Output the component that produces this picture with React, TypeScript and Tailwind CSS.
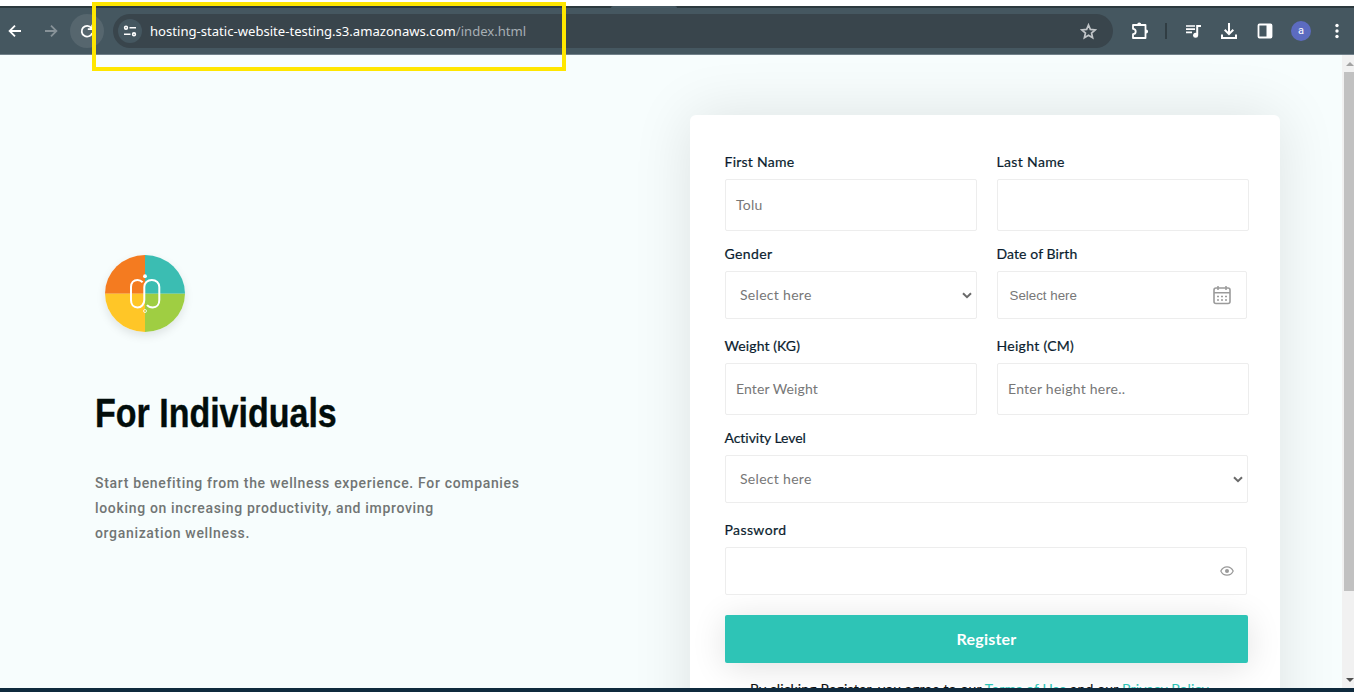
import React from "react";

const sofia = "font-['Lato','Open_Sans',sans-serif]";
const box = "flex items-center rounded-[2px] border border-[#ededed] bg-white";

function Label({ children, className }: { children: React.ReactNode; className: string }) {
  return (
    <label className={`-ml-[0.5px] mb-2 block h-[18px] whitespace-nowrap text-[14px] font-normal leading-[18px] text-[#0a1d2e] [-webkit-text-stroke:0.2px_#0a1d2e] ${className}`}>
      {children}
    </label>
  );
}

function Chevron() {
  return (
    <svg width="10" height="7" viewBox="0 0 10 7" className="shrink-0">
      <path d="M1 1.2 5 5.2 9 1.2" fill="none" stroke="#6a6a6a" strokeWidth="2" />
    </svg>
  );
}

function Toolbar() {
  return (
    <header className="shrink-0">
      <div className="h-1.5 bg-white" />
      <div className="flex h-0.5 bg-[#2c393e]">
        <div className="ml-[611px] h-0.5 w-[66px] rounded-t-sm bg-[#455760]" />
      </div>
      <div className="flex h-[47px] items-start border-b border-[#71818a] bg-[#455760] pt-1.5">
        <div className="flex h-[34px] w-[113px] shrink-0 items-center">
          <svg width="16" height="16" viewBox="0 0 16 16" className="ml-[7px]" fill="none" stroke="#fff" strokeWidth="1.8">
            <path d="M14 8H3M8 2.6 2.6 8 8 13.4" />
          </svg>
          <svg width="16" height="16" viewBox="0 0 16 16" className="ml-5" fill="none" stroke="#879298" strokeWidth="1.8">
            <path d="M2 8h11M8 2.6 13.4 8 8 13.4" />
          </svg>
          <div className="ml-[11px] flex size-[34px] items-center justify-center rounded-full bg-[#56666e]">
            <svg width="16" height="16" viewBox="0 0 16 16" fill="none" stroke="#fff" strokeWidth="1.8">
              <path d="M13.2 10A5.4 5.4 0 1 1 12.4 4.9M13.2 1.8v4.4H8.8" />
            </svg>
          </div>
        </div>
        <div className="flex h-[34px] w-[1000px] shrink-0 items-center rounded-full bg-[#39454c] pl-[5px] pr-4">
          <div className="flex size-6 items-center justify-center rounded-full bg-[#455760]">
            <svg width="14" height="12" viewBox="0 0 14 12" fill="none" stroke="#fff" strokeWidth="1.6">
              <circle cx="3" cy="2.7" r="1.4" />
              <path d="M6.500 2.7H13M1 9.3h6.500" />
              <circle cx="11" cy="9.3" r="1.4" />
            </svg>
          </div>
          <div className="ml-2 whitespace-nowrap font-['Noto_Sans','Open_Sans',sans-serif] text-[13.1px] leading-5 text-[#a7afb4]">
            <span className="text-white">hosting-static-website-testing.s3.amazonaws.com</span>/index.html
          </div>
          <svg width="17" height="17" viewBox="0 0 24 24" className="ml-auto" fill="none" stroke="#c1c5c8" strokeWidth="2.4">
            <path d="m12 2.8 2.6 6.3 6.8.6-5.1 4.5 1.5 6.7-5.8-3.5-5.8 3.5 1.5-6.7-5.1-4.5 6.8-.6z" />
          </svg>
        </div>
        <div className="flex h-[34px] flex-1 items-center">
          <svg width="18" height="18" viewBox="0 0 18 18" className="ml-[18px]">
            <path d="M2 3h12.500v13H2v-3.800a2.700 2.700 0 0 0 0-5.400z" fill="none" stroke="#fff" strokeWidth="1.8" strokeLinejoin="round" />
            <path d="M6.200 2.500a2 2 0 0 1 4 0zM15 7.400a2.100 2.100 0 0 1 0 4.2z" fill="#fff" />
          </svg>
          <div className="ml-4 h-4 w-0.5 bg-[#303d43]" />
          <svg width="17" height="15" viewBox="0 0 17 15" className="ml-[18px]">
            <path d="M1 2h9M1 5.2h9M1 8.4h6" stroke="#fff" strokeWidth="1.7" />
            <path d="M12.2 11V2H16" fill="none" stroke="#fff" strokeWidth="2" />
            <circle cx="10.6" cy="11.2" r="2.5" fill="#fff" />
          </svg>
          <svg width="18" height="17" viewBox="0 0 18 17" className="ml-[18px]" fill="none" stroke="#fff" strokeWidth="2">
            <path d="M9 0v11M4.7 6.8 9 11.1l4.3-4.3M2 11.5V15h14v-3.5" />
          </svg>
          <svg width="16" height="16" viewBox="0 0 16 16" className="ml-[19px]">
            <rect x="1.5" y="1.5" width="13" height="13" rx="1" fill="none" stroke="#fff" strokeWidth="1.8" />
            <path d="M9.5 1h5v14h-5z" fill="#fff" />
          </svg>
          <div className="ml-[18px] flex size-5 items-center justify-center rounded-full bg-[#5c6bc0] font-['Roboto',sans-serif] text-[11px] leading-5 text-white">a</div>
          <svg width="4" height="16" viewBox="0 0 4 16" className="ml-6" fill="#fff">
            <circle cx="2" cy="2.5" r="1.7" />
            <circle cx="2" cy="8" r="1.7" />
            <circle cx="2" cy="13.5" r="1.7" />
          </svg>
        </div>
      </div>
    </header>
  );
}

function Logo() {
  return (
    <svg width="80" height="77" viewBox="0 0 80 77" className="ml-[10px] rounded-[50%] shadow-[0_4px_10px_rgba(0,0,0,0.1)]">
      <path d="M0 0h40v38.700H0z" fill="#f47b20" />
      <path d="M40 0h40v38.700H40z" fill="#3bbdb2" />
      <path d="M0 38.700h40V77H0z" fill="#ffc627" />
      <path d="M40 38.700h40V77H40z" fill="#9fce42" />
      <g fill="none" stroke="#fff" strokeWidth="2">
        <path d="M37.6 27.2Q35.5 25 32.5 25C28.500 25 26 28 26 32v13c0 4.500 2.500 7.500 6.500 7.500S39.300 49 39.300 45V32c0-4 3-7 7.500-7s7.500 3 7.500 7v13c0 4.500-2.500 7.500-6.500 7.500q-3.800 0-5.800-2.500" />
        <circle cx="40" cy="56" r="1.500" strokeWidth=".8" />
      </g>
      <circle cx="40" cy="21.200" r="1.900" fill="#fff" />
    </svg>
  );
}

function Intro() {
  return (
    <section className="w-[690px] shrink-0 pl-[95px] pt-[200px]">
      <Logo />
      <h1 className="mt-[57px] w-max origin-left scale-x-[0.829] whitespace-nowrap font-['Liberation_Sans',Arial,sans-serif] text-[41px] font-bold leading-[48px] text-[#020d0b] [-webkit-text-stroke:0.4px_#020d0b]">
        For Individuals
      </h1>
      <p className="mt-[34px] w-[440px] whitespace-nowrap font-['Roboto',sans-serif] text-[14px] font-medium leading-[25px] tracking-[0.67px] text-[#717574]">
        Start benefiting from the wellness experience. For companies<br />
        looking on increasing productivity, and improving<br />
        organization wellness.
      </p>
    </section>
  );
}

function RegisterCard() {
  return (
    <section className={`mt-[60px] h-[760px] w-[590px] shrink-0 rounded-md bg-white pl-[35px] pt-[38px] shadow-[0_0_60px_rgba(0,20,20,0.11)] ${sofia}`}>
      <div className="grid grid-cols-[252px_252px] auto-rows-[92px] gap-x-5 text-[14px] text-[#777]">
        <div>
          <Label className="tracking-[0.25px]">First Name</Label>
          <div className={`${box} h-[52px] w-[252px] pb-[2px] pl-[10px] tracking-[0.2px]`}>Tolu</div>
        </div>
        <div>
          <Label className="tracking-[0.35px]">Last Name</Label>
          <div className={`${box} h-[52px] w-[252px]`} />
        </div>
        <div>
          <Label className="tracking-[0.4px]">Gender</Label>
          <div className={`${box} h-12 w-[252px] justify-between pl-[14px] pr-1 tracking-[0.3px]`}><span className="pb-[2px]">Select here</span><Chevron /></div>
        </div>
        <div>
          <Label className="tracking-[0.1px]">Date of Birth</Label>
          <div className={`${box} h-12 w-[250px] justify-between pl-[11.500px] pr-[15px] font-['Liberation_Sans',Arial,sans-serif] text-[13.33px]`}>
            <span className="pt-px">Select here</span>
            <svg width="18" height="20" viewBox="0 0 18 20" fill="none" stroke="#9b9b9b">
              <rect x="1" y="3" width="16" height="15.500" rx="2" strokeWidth="1.600" />
              <path d="M1 7.800h16M5 1v4M13 1v4" strokeWidth="1.500" />
              <path d="M4 11.500h2M8 11.500h2M12 11.500h2M4 15h2M8 15h2M12 15h2" strokeWidth="1.600" />
            </svg>
          </div>
        </div>
        <div>
          <Label className="tracking-[0.1px]">Weight (KG)</Label>
          <div className={`${box} h-[52px] w-[252px] pb-[2px] pl-[10px] tracking-[0.1px]`}>Enter Weight</div>
        </div>
        <div>
          <Label className="tracking-[0.3px]">Height (CM)</Label>
          <div className={`${box} h-[52px] w-[252px] pb-[2px] pl-[10px] tracking-[0.25px]`}>Enter height here..</div>
        </div>
        <div className="col-span-2">
          <Label className="tracking-[-0.05px]">Activity Level</Label>
          <div className={`${box} h-12 w-[523px] justify-between pl-[14px] pr-1 tracking-[0.3px]`}><span className="pb-[2px]">Select here</span><Chevron /></div>
        </div>
        <div className="col-span-2">
          <Label className="tracking-[0.4px]">Password</Label>
          <div className={`${box} h-12 w-[522px] justify-end pr-3`}>
            <svg width="14" height="10" viewBox="0 0 14 10" fill="none" stroke="#999" strokeWidth="1.200">
              <path d="M.8 5C2.200 2 4.400.8 7 .8S11.800 2 13.200 5C11.800 8 9.600 9.200 7 9.200S2.200 8 .8 5z" />
              <circle cx="7" cy="5" r="2" fill="#999" stroke="none" />
            </svg>
          </div>
        </div>
      </div>
      <button className="mt-[2px] block h-12 w-[523px] rounded-[2px] bg-[#2ec4b6] pb-px text-[16px] font-bold leading-[46px] tracking-[0.2px] text-white shadow-[0_4px_34px_rgba(0,0,0,0.12)]">
        Register
      </button>
      <p className="ml-[25px] mt-[17px] whitespace-nowrap text-[14px] leading-[18px] tracking-[0.17px] text-[#111] [-webkit-text-stroke:0.1px]">
        By clicking Register, you agree to our <span className="text-[#2ec4b6]">Terms of Use</span> and our <span className="text-[#2ec4b6]">Privacy Policy.</span>
      </p>
    </section>
  );
}

export default function App() {
  return (
    <div className="relative flex h-[692px] w-[1354px] flex-col overflow-hidden bg-[#f7fdfd]">
      <Toolbar />
      <main className="flex min-h-0 flex-1 overflow-hidden">
        <div className="flex w-[1342px] shrink-0 overflow-hidden">
          <Intro />
          <RegisterCard />
        </div>
        <div className="flex w-3 flex-col items-end justify-between bg-[#f1f1f1]">
          <svg width="8" height="17" viewBox="0 0 8 17"><path d="M0 11 4 7l4 4z" fill="#a3a3a3" /></svg>
          <div className="mb-auto h-[519px] w-[10px] bg-[#c1c1c1]" />
          <svg width="8" height="17" viewBox="0 0 8 17"><path d="M0 7h8l-4 4z" fill="#505050" /></svg>
        </div>
      </main>
      <footer className="h-1 shrink-0 bg-[#0f2a3d]" />
      <div className="pointer-events-none absolute left-[92px] top-[2px] h-[69px] w-[474px] border-4 border-[#ffe600]" />
    </div>
  );
}
